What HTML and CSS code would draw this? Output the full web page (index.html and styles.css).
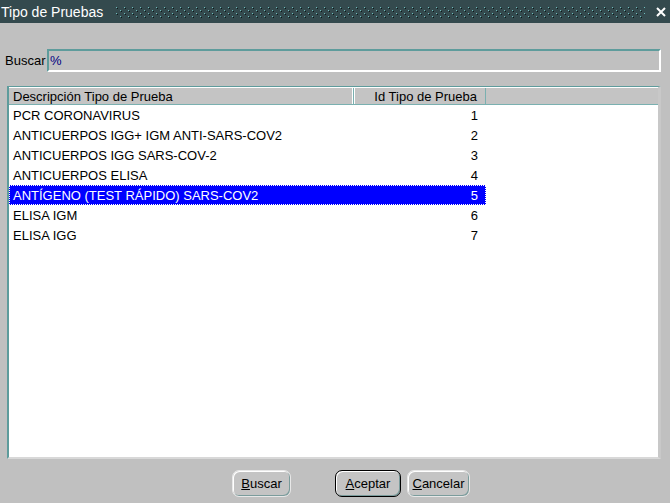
FILE: index.html
```html
<!DOCTYPE html>
<html>
<head>
<meta charset="utf-8">
<link rel="stylesheet" href="styles.css">
</head>
<body>
<div class="win">
  <div class="titlebar">
    <span class="title">Tipo de Pruebas</span>
    <svg class="dots" width="530" height="22">
      <defs>
        <pattern id="dp" x="0" y="0" width="8" height="22" patternUnits="userSpaceOnUse">
          <rect x="1" y="6" width="1" height="1" fill="#6fbcbc"/>
          <rect x="2" y="7" width="1" height="1" fill="#0a1a1a"/>
          <rect x="5" y="9" width="1" height="1" fill="#6fbcbc"/>
          <rect x="6" y="10" width="1" height="1" fill="#0a1a1a"/>
          <rect x="1" y="12" width="1" height="1" fill="#6fbcbc"/>
          <rect x="2" y="13" width="1" height="1" fill="#0a1a1a"/>
          <rect x="5" y="15" width="1" height="1" fill="#6fbcbc"/>
          <rect x="6" y="16" width="1" height="1" fill="#0a1a1a"/>
        </pattern>
      </defs>
      <rect x="0" y="0" width="530" height="22" fill="url(#dp)"/>
    </svg>
    <svg class="close" width="12" height="12" viewBox="0 0 12 12">
      <path d="M2 2 L10 10 M10 2 L2 10" stroke="#ffffff" stroke-width="2"/>
    </svg>
  </div>
  <div class="content">
    <div class="search">
      <span class="lbl">Buscar</span>
      <div class="field">%</div>
    </div>
    <div class="list">
      <div class="head">
        <div class="c1">Descripción Tipo de Prueba</div>
        <div class="c2">Id Tipo de Prueba</div>
        <div class="c3"></div>
      </div>
      <div class="row"><div class="c1">PCR CORONAVIRUS</div><div class="c2">1</div></div>
      <div class="row"><div class="c1">ANTICUERPOS IGG+ IGM ANTI-SARS-COV2</div><div class="c2">2</div></div>
      <div class="row"><div class="c1">ANTICUERPOS IGG SARS-COV-2</div><div class="c2">3</div></div>
      <div class="row"><div class="c1">ANTICUERPOS ELISA</div><div class="c2">4</div></div>
      <div class="row sel"><div class="c1">ANTÍGENO (TEST RÁPIDO) SARS-COV2</div><div class="c2">5</div></div>
      <div class="row"><div class="c1">ELISA IGM</div><div class="c2">6</div></div>
      <div class="row"><div class="c1">ELISA IGG</div><div class="c2">7</div></div>
    </div>
    <div class="buttons">
      <button class="btn b1"><u>B</u>uscar</button>
      <button class="btn b2 def"><u>A</u>ceptar</button>
      <button class="btn b3"><u>C</u>ancelar</button>
    </div>
  </div>
</div>
</body>
</html>
```
FILE: styles.css
```css
html, body {
  margin: 0;
  padding: 0;
  width: 670px;
  height: 503px;
  overflow: hidden;
  background: #c0c0c0;
  font-family: "Liberation Sans", Arial, sans-serif;
  font-size: 13px;
}
.win {
  width: 670px;
  height: 503px;
  display: flex;
  flex-direction: column;
  background: #c0c0c0;
}
.titlebar {
  height: 23px;
  background: #344a4e;
  display: flex;
  align-items: center;
  color: #fff;
  flex: none;
}
.title {
  font-size: 14px;
  font-weight: normal;
  margin-left: 1px;
  width: 114px;
  white-space: nowrap;
}
.dots {
  display: block;
  height: 22px;
}
.close {
  margin-left: 10px;
}
.content {
  flex: 1;
  display: flex;
  flex-direction: column;
  padding: 0 9px 0 6px;
}
.search {
  display: flex;
  align-items: stretch;
  margin-top: 26px;
  height: 23px;
}
.lbl {
  line-height: 23px;
  margin-left: -1px;
  width: 42px;
}
.field {
  flex: 1;
  box-sizing: border-box;
  border-top: 2px solid #5e9c9c;
  border-left: 2px solid #5e9c9c;
  border-bottom: 2px solid #fff;
  border-right: 2px solid #fff;
  color: #000080;
  line-height: 19px;
  padding-left: 1px;
}
.list {
  margin-top: 14px;
  margin-left: 1px;
  height: 373px;
  box-sizing: border-box;
  background: #fff;
  border-left: 2px solid #5e9c9c;
  border-top: 1px solid #5e9c9c;
  border-right: 3px solid #c8c8c8;
  border-bottom: 2px solid #d8d8d8;
  box-shadow: inset -1px 0 0 #fff;
}
.head {
  display: flex;
  height: 18px;
  background: #c4c4c4;
  border-bottom: 1px solid #7ab0b0;
  border-top: 1px solid #fff;
  box-sizing: border-box;
}
.head > div {
  line-height: 17px;
  box-sizing: border-box;
}
.head .c1 {
  width: 345px;
  padding-left: 4px;
  border-right: 1px solid #7ab0b0;
  box-shadow: inset -1px 0 0 #fff;
}
.head .c2 {
  width: 132px;
  text-align: right;
  padding-right: 8px;
  border-right: 1px solid #7ab0b0;
  border-left: 1px solid #fff;
}
.head .c3 {
  flex: 1;
}
.row {
  display: flex;
  height: 20px;
  line-height: 21px;
  color: #000;
}
.row .c1 {
  width: 345px;
  padding-left: 4px;
  box-sizing: border-box;
  white-space: nowrap;
}
.row .c2 {
  width: 132px;
  text-align: right;
  padding-right: 8px;
  box-sizing: border-box;
}
.row.sel {
  width: 477px;
  background: #0000ff;
  color: #fff;
  outline: 1px dotted #ffffff;
  outline-offset: -1px;
}
.buttons {
  display: flex;
  margin-top: 11px;
  padding-left: 226px;
}
.btn {
  font-family: "Liberation Sans", Arial, sans-serif;
  font-size: 13px;
  color: #000;
  background: #c4c4c4;
  height: 27px;
  border: 1px solid #e8e8e8;
  border-radius: 7px;
  box-shadow: inset 1px 1px 0 #fff, inset -1px -1px 0 #7a9c9c;
  padding: 0;
}
.btn u {
  text-decoration: underline;
}
.b1 {
  width: 59px;
}
.b2 {
  width: 66px;
  margin-left: 44px;
  border: 1px solid #000;
}
.b3 {
  width: 63px;
  margin-left: 6px;
}
```
